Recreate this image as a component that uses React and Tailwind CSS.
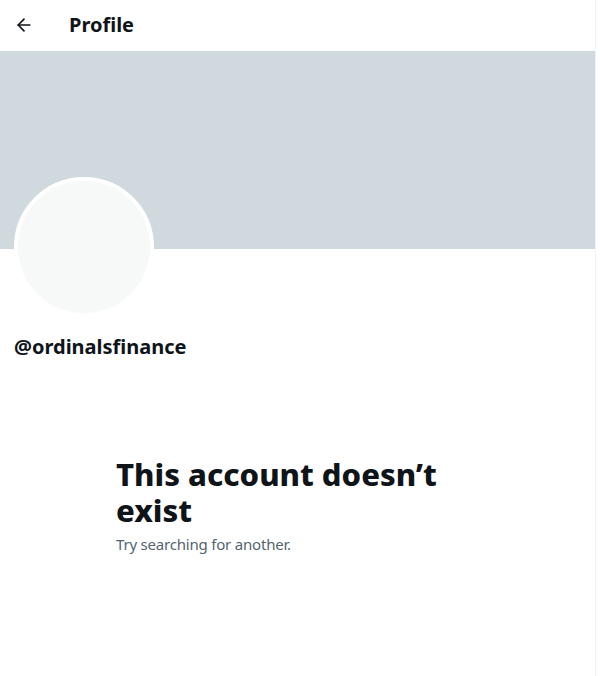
import { ArrowLeft } from 'lucide-react';

const App = () => {
  return (
    <div className="min-h-screen bg-white font-['Noto_Sans',sans-serif] text-[#0f1419]">
      <div className="w-[596px] min-h-screen border-r border-[#eff3f4]">
        <div className="h-[51px] flex items-center px-[14px] pb-[2px]">
          <div className="w-[38px] flex items-center">
            <ArrowLeft size={20} strokeWidth={2} />
          </div>
          <h2 className="ml-[17px] text-[20px] font-bold leading-6">Profile</h2>
        </div>

        <div className="h-[198px] bg-[#cfd9de]" />

        <div className="px-[14px]">
          <div className="-mt-[72px] w-[140px] h-[140px] rounded-full border-4 border-white bg-[#f7f9f9]" />
          <div className="mt-[18px] text-[20px] font-bold leading-6">@ordinalsfinance</div>
        </div>

        <div className="mt-[97px] pl-[116px] pr-[150px]">
          <h1 className="text-[31px] font-extrabold leading-[36px]">This account doesn’t exist</h1>
          <p className="mt-[6px] text-[15px] leading-5 tracking-[-0.2px] text-[#536471]">Try searching for another.</p>
        </div>
      </div>
    </div>
  );
};

export default App;
